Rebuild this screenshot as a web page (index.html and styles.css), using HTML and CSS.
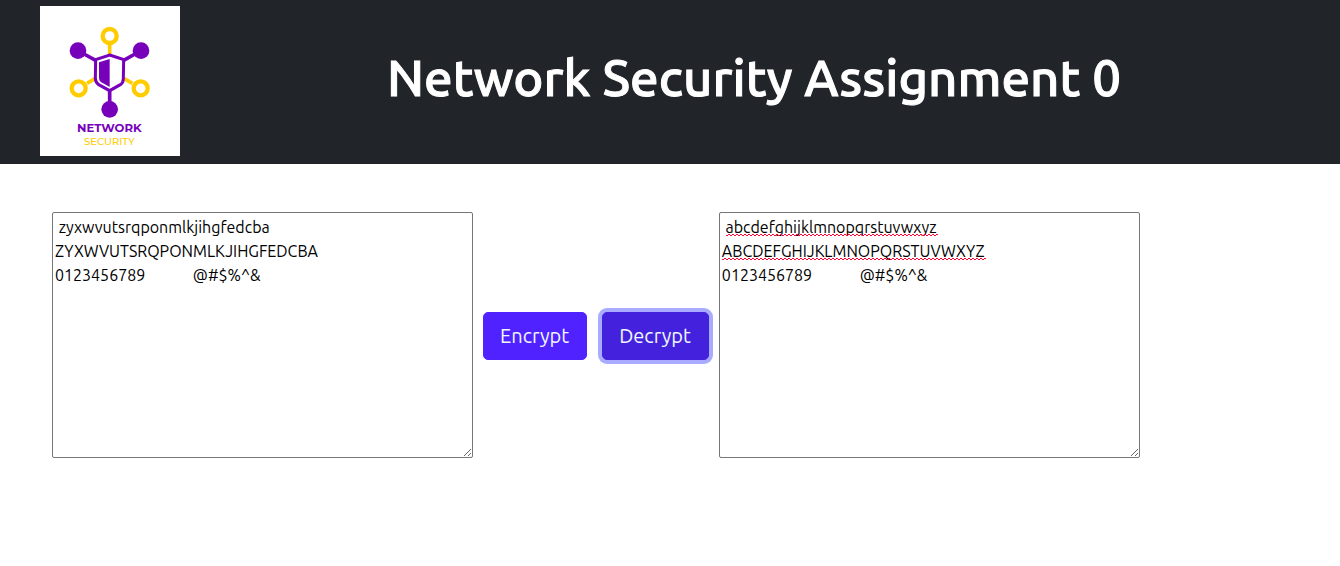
FILE: index.html
```html
<!DOCTYPE html>
<html lang="en">
<head>
<meta charset="utf-8">
<meta name="viewport" content="width=device-width, initial-scale=1">
<title>Network Security Assignment 0</title>
<link rel="stylesheet" href="styles.css">
</head>
<body>
<header class="header">
  <svg class="logo" viewBox="30 18 420 450" role="img" aria-label="Network Security">
    <rect x="30" y="18" width="420" height="450" fill="#fff"/>
    <g fill="none" stroke="#fc0" stroke-width="11">
      <path d="M239 134V164M171 250l24-14M307 250l-24-14"/>
      <circle cx="239" cy="108" r="21" stroke-width="13"/>
      <circle cx="146" cy="265" r="21" stroke-width="13"/>
      <circle cx="332" cy="265" r="21" stroke-width="13"/>
    </g>
    <g fill="#70b">
      <circle cx="144" cy="152" r="25"/>
      <circle cx="333" cy="152" r="25"/>
      <circle cx="239" cy="328" r="25"/>
      <path d="M239 177V261L214 247Q207 243 207 234V187Z"/>
    </g>
    <g fill="none" stroke="#70b" stroke-width="9">
      <path d="M239 165L281 179L280 236Q280 248 271 254L239 272L206 254Q197 248 196 236L197 179Z"/>
      <path d="M162 162l35 19M315 162l-34 19M239 270v38" stroke-width="11"/>
    </g>
    <text class="logo-name" x="238" y="396" text-anchor="middle">NETWORK</text>
    <text class="logo-sub" x="238" y="435" text-anchor="middle">SECURITY</text>
  </svg>
  <h1 class="title">Network Security Assignment 0</h1>
</header>
<main class="cipher">
  <div class="field">
    <textarea class="box" aria-label="Encrypted text" spellcheck="false"> zyxwvutsrqponmlkjihgfedcba
ZYXWVUTSRQPONMLKJIHGFEDCBA
0123456789             @#$%^&amp;</textarea>
  </div>
  <div class="actions">
    <button class="btn" type="button">Encrypt</button>
    <button class="btn btn-active" type="button">Decrypt</button>
  </div>
  <div class="field">
    <textarea class="box" aria-label="Plain text" spellcheck="false"> abcdefghijklmnopqrstuvwxyz
ABCDEFGHIJKLMNOPQRSTUVWXYZ
0123456789             @#$%^&amp;</textarea>
    <svg class="squiggles" width="270" height="28" aria-hidden="true">
      <defs>
        <pattern id="wave" width="4" height="3" patternUnits="userSpaceOnUse">
          <path d="M-1 0L1 2L3 0L5 2" fill="none" stroke="#f03" stroke-width="1"/>
        </pattern>
      </defs>
      <rect x="4" y="0" width="212" height="2" fill="url(#wave)"/>
      <rect x="0" y="24" width="264" height="2" fill="url(#wave)"/>
    </svg>
  </div>
</main>
</body>
</html>
```
FILE: styles.css
```css
* {
  box-sizing: border-box;
}

body {
  margin: 0;
  background: #fff;
  color: #000;
  font-family: Ubuntu, "Noto Sans", sans-serif;
  font-size: 16px;
  line-height: 24px;
}

.header {
  display: flex;
  align-items: center;
  padding: 6px 12px 8px 40px;
  background: #212529;
  color: #fff;
}

.logo {
  flex: none;
  width: 140px;
  height: 150px;
}

.logo-name {
  fill: #70b;
  font: bold 35px Montserrat, Lato, sans-serif;
}

.logo-sub {
  fill: #fc0;
  font: 500 30px Montserrat, Lato, sans-serif;
}

.title {
  flex: 1;
  margin: 0;
  padding-bottom: 8px;
  font-size: 51px;
  font-weight: 500;
  line-height: 60px;
  text-align: center;
  -webkit-text-stroke: 1px currentColor;
}

.cipher {
  display: flex;
  align-items: center;
  gap: 10px;
  padding: 48px 52px;
}

.field {
  position: relative;
  display: flex;
  flex: 0 1 421px;
}

.box {
  width: 100%;
  height: 246px;
  margin: 0;
  padding: 2px;
  border: 1px solid #767676;
  border-radius: 2px;
  background: #fff;
  color: #000;
  font: inherit;
}

.squiggles {
  position: absolute;
  top: 22px;
  left: 3px;
  pointer-events: none;
}

.actions {
  display: flex;
  gap: 15px;
  padding-top: 2px;
}

.btn {
  padding: 8px 17px 8px 16px;
  border: 1px solid #5022ff;
  border-radius: 5px;
  background: #5022ff;
  color: #f0f8ff;
  font: inherit;
  font-size: 20px;
  line-height: 30px;
}

.btn-active {
  border-color: #4422dd;
  background: #4422dd;
  box-shadow: 0 0 0 4px #a8abff;
}
```
